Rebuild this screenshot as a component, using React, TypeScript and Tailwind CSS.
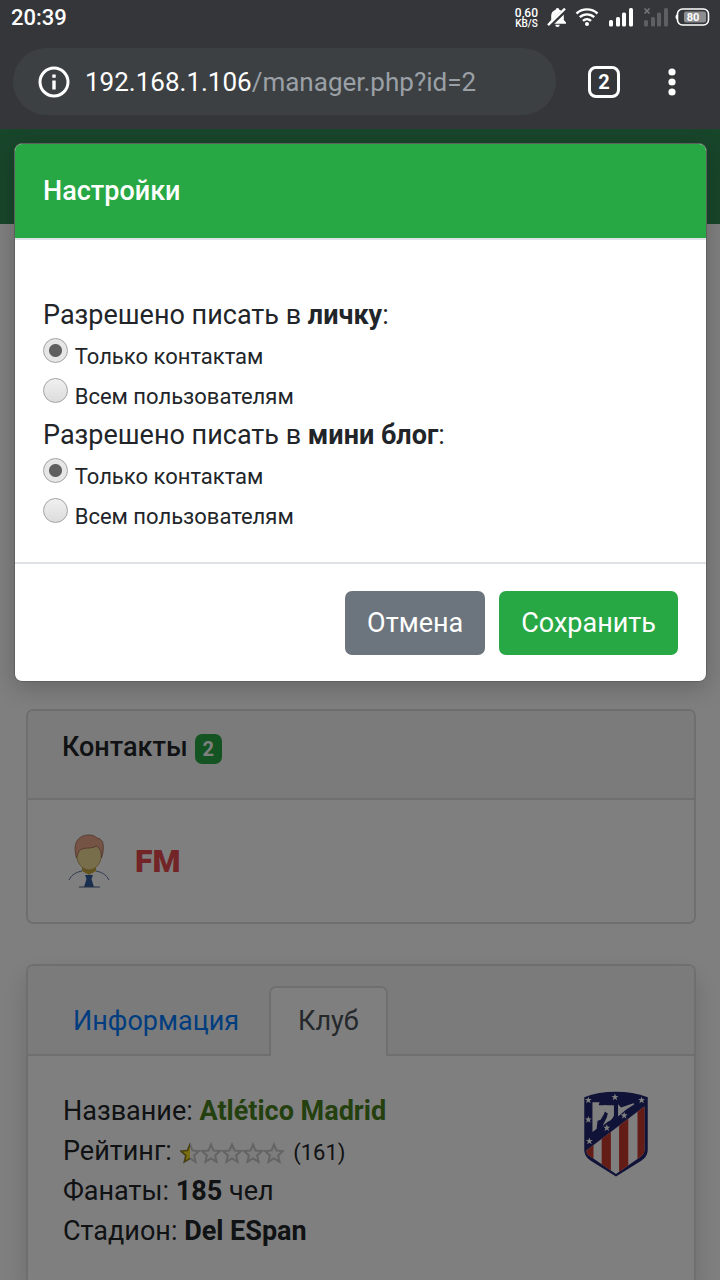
import React, { useState } from "react";

type RadioProps = {
    name: string;
    label: string;
    checked: boolean;
    onChange: () => void;
};

const RadioLine: React.FC<RadioProps> = ({ name, label, checked, onChange }) => (
    <div className="h-10">
        <label>
            <input
                type="radio"
                name={name}
                checked={checked}
                onChange={onChange}
                className="mb-px inline-block size-[25px] appearance-none rounded-full border border-[#a3a3a3] bg-linear-to-b from-[#f0f0f0] to-[#dcdcdc] align-baseline checked:bg-[radial-gradient(circle,#5f5f5f_6px,#e6e6e6_7px)]"
            />{" "}
            <span className="text-[22px]">{label}</span>
        </label>
    </div>
);

const STAR = "M10 1.5l2.5 6 6.5.6-4.9 4.3 1.500 6.400-5.600-3.400-5.600 3.400 1.500-6.400L1 8.100l6.500-.6z";

const Rating: React.FC = () => (
    <svg className="mx-0.5 inline-block h-[22px] w-[104px] align-middle" viewBox="0 0 104 22" role="img" aria-label="0.5 / 5">
        <defs>
            <clipPath id="half">
                <rect width="10" height="22" />
            </clipPath>
        </defs>
        {[0, 1, 2, 3, 4].map((i) => (
            <path key={i} d={STAR} transform={`translate(${i * 21} 1)`} fill="#fafafa" stroke="#c8c8c8" strokeWidth="2" />
        ))}
        <path d={STAR} transform="translate(0 1)" fill="#f5de20" stroke="#8f7f20" strokeWidth="1.5" clipPath="url(#half)" />
    </svg>
);

const StatusIcons: React.FC = () => (
    <svg className="h-[22px] w-[164px]" viewBox="546 7 164 22" fill="#fff" aria-hidden="true">
        {/* muted bell */}
        <path d="M557.500 8c1.100 0 1.800.8 1.800 1.700 2.900.9 4.500 3.200 4.500 6.100v4.200l2.200 2.400v1.400h-17v-1.400l2.200-2.400v-4.200c0-2.900 1.600-5.200 4.500-6.100 0-.9.700-1.700 1.800-1.700zM555.300 24.800h4.400a2.200 2.200 0 0 1-4.400 0z" />
        <path d="M548.500 26.500L566.500 9" stroke="#35363a" strokeWidth="4.500" />
        <path d="M548 25.200L565 8.700" stroke="#fff" strokeWidth="2.300" />
        {/* wifi */}
        <g fill="none" stroke="#fff" strokeWidth="2.400">
            <path d="M576.500 13.500a15.500 15.500 0 0 1 21 0" />
            <path d="M579.800 17.200a10.500 10.500 0 0 1 14.400 0" />
            <path d="M583 20.800a5.800 5.800 0 0 1 8 0" />
        </g>
        <circle cx="587" cy="24" r="2" />
        <g>
            <rect x="609" y="20" width="4" height="6.500" rx="1.500" />
            <rect x="616" y="17" width="4" height="9.500" rx="1.500" />
            <rect x="622" y="12.500" width="4" height="14" rx="1.500" />
            <rect x="629" y="8" width="4" height="18.500" rx="1.500" />
        </g>
        <g fill="#5e5f62">
            <rect x="644" y="20" width="4" height="6.500" rx="1.500" />
            <rect x="651" y="17" width="4" height="9.500" rx="1.500" />
            <rect x="657" y="12.500" width="4" height="14" rx="1.500" />
            <rect x="664" y="8" width="4" height="18.500" rx="1.500" />
            <path d="M644.500 8.500l5 5m0-5l-5 5" stroke="#77787b" strokeWidth="1.500" />
        </g>
        {/* battery */}
        <rect x="677.500" y="9" width="31" height="16" rx="5" fill="none" stroke="#fff" strokeWidth="1.600" />
        <path d="M677 14.500c-2 .5-2 4.500 0 5z" />
        <rect x="684" y="11.500" width="22" height="11" rx="2" fill="#8d8e90" />
        <text x="693" y="21" textAnchor="middle" fontSize="11" fontWeight="700" fontFamily="Roboto, sans-serif">
            80
        </text>
    </svg>
);

const BrowserBar: React.FC = () => (
    <header className="bg-[#35363a] pb-[14px] text-white">
        <div className="flex h-9 items-center justify-between pr-[10px] pl-[11px]">
            <span className="text-[22px] font-medium">20:39</span>
            <div className="flex items-center gap-2">
                <div className="text-center font-medium">
                    <div className="text-[12px] leading-3">0,60</div>
                    <div className="text-[10px] leading-[10px]">KB/S</div>
                </div>
                <StatusIcons />
            </div>
        </div>
        <div className="mt-3 flex items-center pl-[13px]">
            <button
                type="button"
                className="flex h-[67px] flex-1 items-center gap-[15px] rounded-full bg-[#3c4043] pl-[25px] text-left text-[26px]"
            >
                <svg className="size-8" viewBox="0 0 32 32" fill="none" stroke="#fff" aria-hidden="true">
                    <circle cx="16" cy="16" r="14" strokeWidth="3" />
                    <path d="M16 14.500v9M16 8.500v3.300" strokeWidth="3.400" />
                </svg>
                <span>
                    192.168.1.106<span className="text-[#9aa0a6]">/manager.php?id=2</span>
                </span>
            </button>
            <button
                type="button"
                className="ml-8 flex size-8 items-center justify-center rounded-[8px] border-[3px] border-white text-[20px] font-bold"
            >
                2
            </button>
            <button type="button" aria-label="Меню" className="mr-8 ml-9 flex w-8 justify-center">
                <svg className="h-7 w-2" viewBox="0 0 8 28" fill="#fff" aria-hidden="true">
                    <circle cx="4" cy="4" r="3.600" />
                    <circle cx="4" cy="14" r="3.600" />
                    <circle cx="4" cy="24" r="3.600" />
                </svg>
            </button>
        </div>
    </header>
);

const Avatar: React.FC = () => (
    <svg className="h-[54px] w-[42px]" viewBox="0 0 42 54" aria-hidden="true">
        <path d="M1 46c3-6 8-8 13-9M41 46c-3-6-8-8-13-9" fill="none" stroke="#5f74a0" />
        <path d="M14 33h14v4l-7 4-7-4z" fill="#c9ab3e" />
        <path d="M8.500 20c0-8 5-12 12.500-12s12.500 4 12.500 12c0 9-6 16-12.500 16S8.500 29 8.500 20z" fill="#f0dc98" stroke="#b09340" strokeWidth=".8" />
        <path
            d="M8.500 24C6 15 7 9 10 5.500 13 2 17 1 21 1c4 0 6 1 8 3 6 1 7 6 6 14l-1.500 6c0-6-1-9-5-12-3 1.500-4 1.500-7 2-5 0-10 1-11 4z"
            fill="#eda98b"
            stroke="#9c6650"
            strokeWidth=".8"
        />
        <path d="M17 41h8l-1.500 4L26 53H16l2.500-8z" fill="#335f9e" />
        <path d="M11 53h21" stroke="#4a5f85" />
    </svg>
);

const CREST_STAR = "M0-3.500l.9 2.300h2.500L1.400.4 2.200 3 0 1.500-2.200 3l.8-2.600-2-1.600h2.500z";
const crestStars = [
    [5, 9],
    [31, 6],
    [57, 9],
    [5, 28],
    [6, 49],
    [23, 36],
    [40, 24],
];

const Crest: React.FC = () => (
    <svg className="h-[86px] w-[66px]" viewBox="0 0 64 84" role="img" aria-label="Atlético Madrid">
        <defs>
            <clipPath id="stripes">
                <path d="M3 58L60 15v42c0 4-2 6-5 8L32 81 7 64c-3-2-4-3-4-6z" />
            </clipPath>
        </defs>
        <path d="M1 6C19-1 44-1 63 6v51c0 5-2 8-6 11L32 83.500 7 68c-4-3-6-6-6-11z" fill="#20246e" />
        <g clipPath="url(#stripes)">
            <rect width="64" height="84" fill="#fff" />
            <rect x="2" width="8" height="84" fill="#c9382f" />
            <rect x="18" width="9" height="84" fill="#c9382f" />
            <rect x="35" width="9" height="84" fill="#c9382f" />
            <rect x="53" width="9" height="84" fill="#c9382f" />
        </g>
        {/* bear and tree */}
        <g fill="#fff">
            <path d="M9 11h7l-1 3 8 0-1 4-2 5-3 5-3 1-1 8-4 3z" />
            <path d="M20 14l10 0v10c-1 3-3 5-6 6l-5 4 4-8 1-4-3-2 1-3z" />
            <path d="M34 13l3 3 12-4 1 1-8 5-8 7z" />
        </g>
        {crestStars.map(([x, y]) => (
            <path key={`${x}-${y}`} d={CREST_STAR} transform={`translate(${x} ${y})`} fill="#fff" />
        ))}
    </svg>
);

const Page: React.FC = () => (
    <div className="min-h-full bg-white">
        <nav className="h-[95px] bg-[#308d56]" />
        <main className="pt-[485px] pr-6 pl-[26px]">
            <section className="mb-[40px] overflow-hidden rounded-[7px] border-2 border-[#dfdfdf]">
                <div className="h-[89px] border-b-2 border-[#dfdfdf] bg-[#f7f7f7] px-[34px] pt-4">
                    <h2 className="flex h-10 items-center gap-[7px] font-medium">
                        Контакты
                        <span className="mt-1 rounded-[7px] bg-[#28a745] px-2 text-[20px] leading-[30px] font-bold text-white">2</span>
                    </h2>
                </div>
                <div className="flex h-[122px] items-center gap-[25px] px-[40px]">
                    <a href="#user" aria-label="Профиль">
                        <Avatar />
                    </a>
                    <a href="#fm" className="text-[32px] font-black text-[#e5484f]">
                        FM
                    </a>
                </div>
            </section>
            <section className="overflow-hidden rounded-t-[7px] border-2 border-b-0 border-[#dfdfdf] shadow-[0_12px_26px_rgba(0,0,0,0.15)]">
                <div className="flex gap-px border-b-2 border-[#dfdfdf] bg-[#f7f7f7] px-4 pt-5">
                    <a href="#info" className="-mb-0.5 flex h-[70px] items-center px-[29px] text-[#007bff]">
                        Информация
                    </a>
                    <a
                        href="#club"
                        className="-mb-0.5 flex h-[70px] items-center rounded-t-[7px] border-2 border-b-0 border-[#dfdfdf] bg-white px-[27px] pb-0.5 text-[#495057]"
                    >
                        Клуб
                    </a>
                </div>
                <div className="flex items-start justify-between py-[35px] pr-[45px] pl-[35px]">
                    <div>
                        <p>
                            Название:{" "}
                            <a href="#team" className="font-bold text-[#47801c]">
                                Atlético Madrid
                            </a>
                        </p>
                        <p>
                            Рейтинг: <Rating /> <span className="text-[22px] leading-none">(161)</span>
                        </p>
                        <p>
                            Фанаты: <b>185</b> чел
                        </p>
                        <p>
                            Стадион: <b>Del ESpan</b>
                        </p>
                    </div>
                    <Crest />
                </div>
            </section>
        </main>
    </div>
);

const options = ["Только контактам", "Всем пользователям"];

const SettingsModal: React.FC = () => {
    const [pm, setPm] = useState(0);
    const [blog, setBlog] = useState(0);

    return (
        <form
            role="dialog"
            aria-label="Настройки"
            className="mr-[13px] ml-[14px] mt-[14px] overflow-hidden rounded-[8px] border border-[#5f5f5f] bg-white shadow-[0_6px_24px_rgba(0,0,0,0.2)]"
        >
            <div className="border-b-2 border-[#dee2e6] bg-[#28a745] px-7 py-[27px] text-white">
                <h1 className="font-medium">Настройки</h1>
            </div>
            <div className="px-7 pt-[55px] pb-[27px]">
                <p>
                    Разрешено писать в <b>личку</b>:
                </p>
                {options.map((o, i) => (
                    <RadioLine key={o} name="pm" label={o} checked={pm === i} onChange={() => setPm(i)} />
                ))}
                <p>
                    Разрешено писать в <b>мини блог</b>:
                </p>
                {options.map((o, i) => (
                    <RadioLine key={o} name="blog" label={o} checked={blog === i} onChange={() => setBlog(i)} />
                ))}
            </div>
            <div className="flex justify-end gap-[14px] border-t-2 border-[#dee2e6] px-7 pt-[27px] pb-[26px]">
                <button type="button" className="h-16 rounded-[7px] bg-[#6c757d] px-[22px] text-white">
                    Отмена
                </button>
                <button type="button" className="h-16 rounded-[7px] bg-[#28a745] px-[22px] text-white">
                    Сохранить
                </button>
            </div>
        </form>
    );
};

export default function App() {
    return (
        <div className="flex h-screen flex-col overflow-hidden font-['Roboto',sans-serif] text-[27px] leading-10 text-[#212529]">
            <BrowserBar />
            <div className="relative flex-1 overflow-hidden">
                <Page />
                <div className="absolute inset-0 bg-black/50">
                    <SettingsModal />
                </div>
            </div>
        </div>
    );
}
